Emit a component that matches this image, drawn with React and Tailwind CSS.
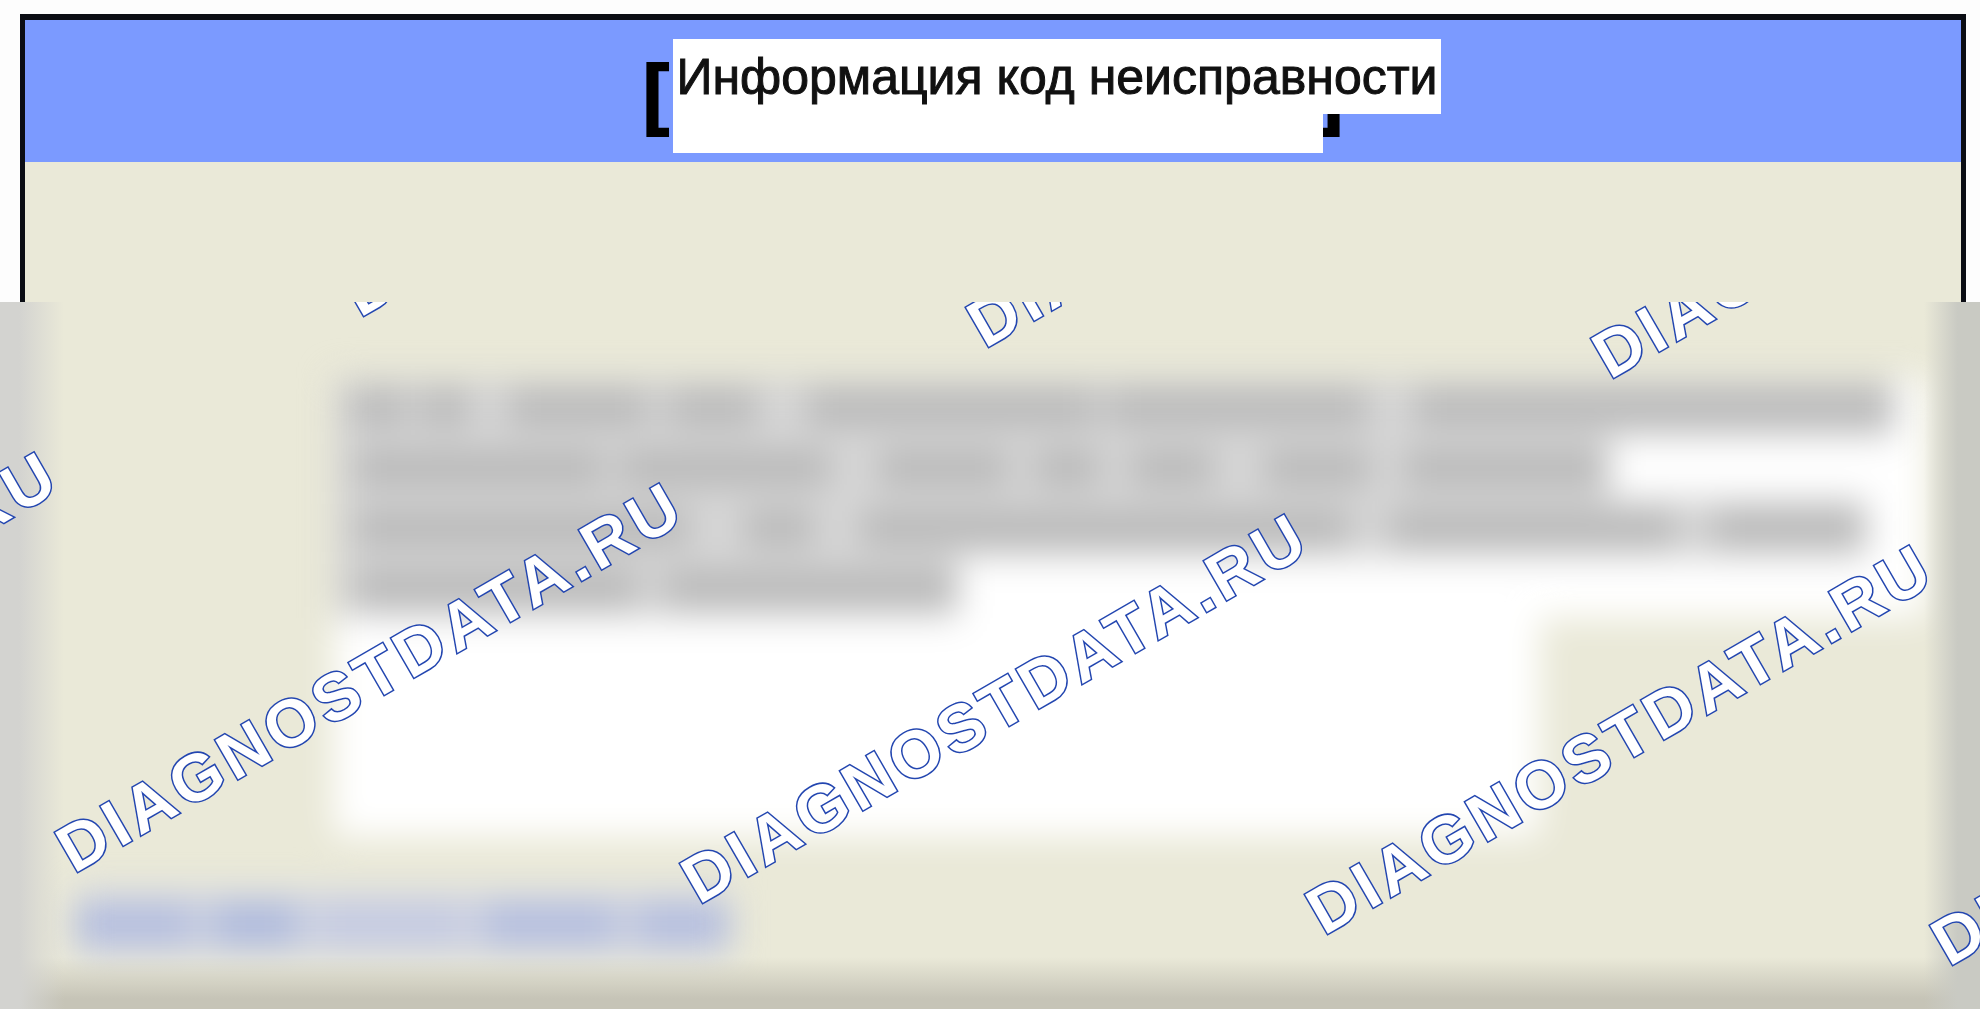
const watermarks = [
  { x: -551, y: 843 },
  { x: 74, y: 874 },
  { x: 699, y: 905 },
  { x: 1324, y: 936 },
  { x: 1949, y: 967 },
  { x: 360, y: 318 },
  { x: 985, y: 349 },
  { x: 1610, y: 380 },
];

// [space before, word width] for each line of the obscured paragraph
const lines = [
  [[16, 56], [14, 50], [38, 140], [20, 90], [48, 290], [12, 260], [46, 480]],
  [[20, 250], [16, 210], [48, 130], [26, 66], [30, 84], [50, 106], [34, 205]],
  [[20, 336], [54, 70], [46, 490], [40, 286], [36, 154]],
  [[20, 284], [26, 294]],
];

function ObscuredLine({ words }) {
  return (
    <div className="flex h-15 w-fit items-center bg-[#d6d6d6]">
      {words.map(([space, width], i) => (
        <span
          key={i}
          className="h-9 bg-[#b8b8b8]"
          style={{ marginLeft: space, width }}
        />
      ))}
    </div>
  );
}

function Watermarks() {
  return (
    <div className="pointer-events-none absolute inset-0" aria-hidden="true">
      {watermarks.map(({ x, y }) => (
        <span
          key={x}
          className="absolute origin-bottom-left -rotate-30 font-bold text-[66px] leading-[46px] tracking-[5px] whitespace-nowrap text-white [-webkit-text-stroke:3px_#2346b0] [paint-order:stroke_fill]"
          style={{ left: x, top: y - 302 - 46 }}
        >
          DIAGNOSTDATA.RU
        </span>
      ))}
    </div>
  );
}

export default function App() {
  return (
    <main className="flex min-h-screen flex-col overflow-hidden bg-[#fdfdfd] font-['Liberation_Sans',Arial,sans-serif]">
      {/* Title panel */}
      <section className="mt-3.5 mr-3.5 ml-5 border-x-5 border-t-6 border-[#0b0d14] bg-[#eae9d8]">
        <header className="flex h-[142px] justify-center bg-[#7b9aff] pt-[19px] pl-2.5">
          <div className="relative flex">
            <span className="absolute top-2 right-full pr-1 text-[78px] leading-[92px] font-bold [-webkit-text-stroke:2px_#000]">[</span>
            <span className="absolute top-2 left-[644px] text-[78px] leading-[92px] font-bold [-webkit-text-stroke:2px_#000]">]</span>
            <div className="relative w-[650px]">
              <h1 className="flex h-[75px] w-[768px] items-center justify-center bg-white text-[50px] leading-[52px] whitespace-nowrap text-[#111] [-webkit-text-stroke:1px_#111]">
                Информация код неисправности
              </h1>
              <div className="h-[39px] bg-white" />
            </div>
          </div>
        </header>
        <div className="h-35 bg-[#eae9d8]" />
      </section>

      {/* Obscured content */}
      <section className="relative flex-1 overflow-hidden bg-[#eae9d8]">
        <div className="pt-[76px] pb-10 blur-[17px]" aria-hidden="true">
          <div className="mr-[54px] ml-[334px] h-[240px] bg-white">
            {lines.map((words, i) => (
              <ObscuredLine key={i} words={words} />
            ))}
          </div>
          <div className="mr-[440px] ml-[334px] h-[218px] bg-white" />
          <div className="mt-[54px] ml-[75px] flex h-[68px] w-[655px] items-center gap-4 bg-[#d6d9e2]">
            <span className="h-10 w-30 bg-[#b2bcde]" />
            <span className="h-10 w-22 bg-[#acb8dc]" />
            <span className="h-10 flex-1 bg-[#c3c9e1]" />
            <span className="h-10 w-34 bg-[#b2bcde]" />
            <span className="h-10 w-24 bg-[#b2bcde]" />
          </div>
        </div>
        <div className="absolute inset-x-0 bottom-0 h-13 bg-linear-to-t from-[#c6c4b7] from-20% to-[#c6c4b7]/0" />
        <div className="absolute inset-y-0 left-0 w-16 bg-linear-to-r from-[#d3d3d0] from-30% to-[#d3d3d0]/0" />
        <div className="absolute inset-y-0 right-0 w-14 bg-linear-to-l from-[#c9cac3] from-40% to-[#c9cac3]/0" />
        <Watermarks />
      </section>
    </main>
  );
}
